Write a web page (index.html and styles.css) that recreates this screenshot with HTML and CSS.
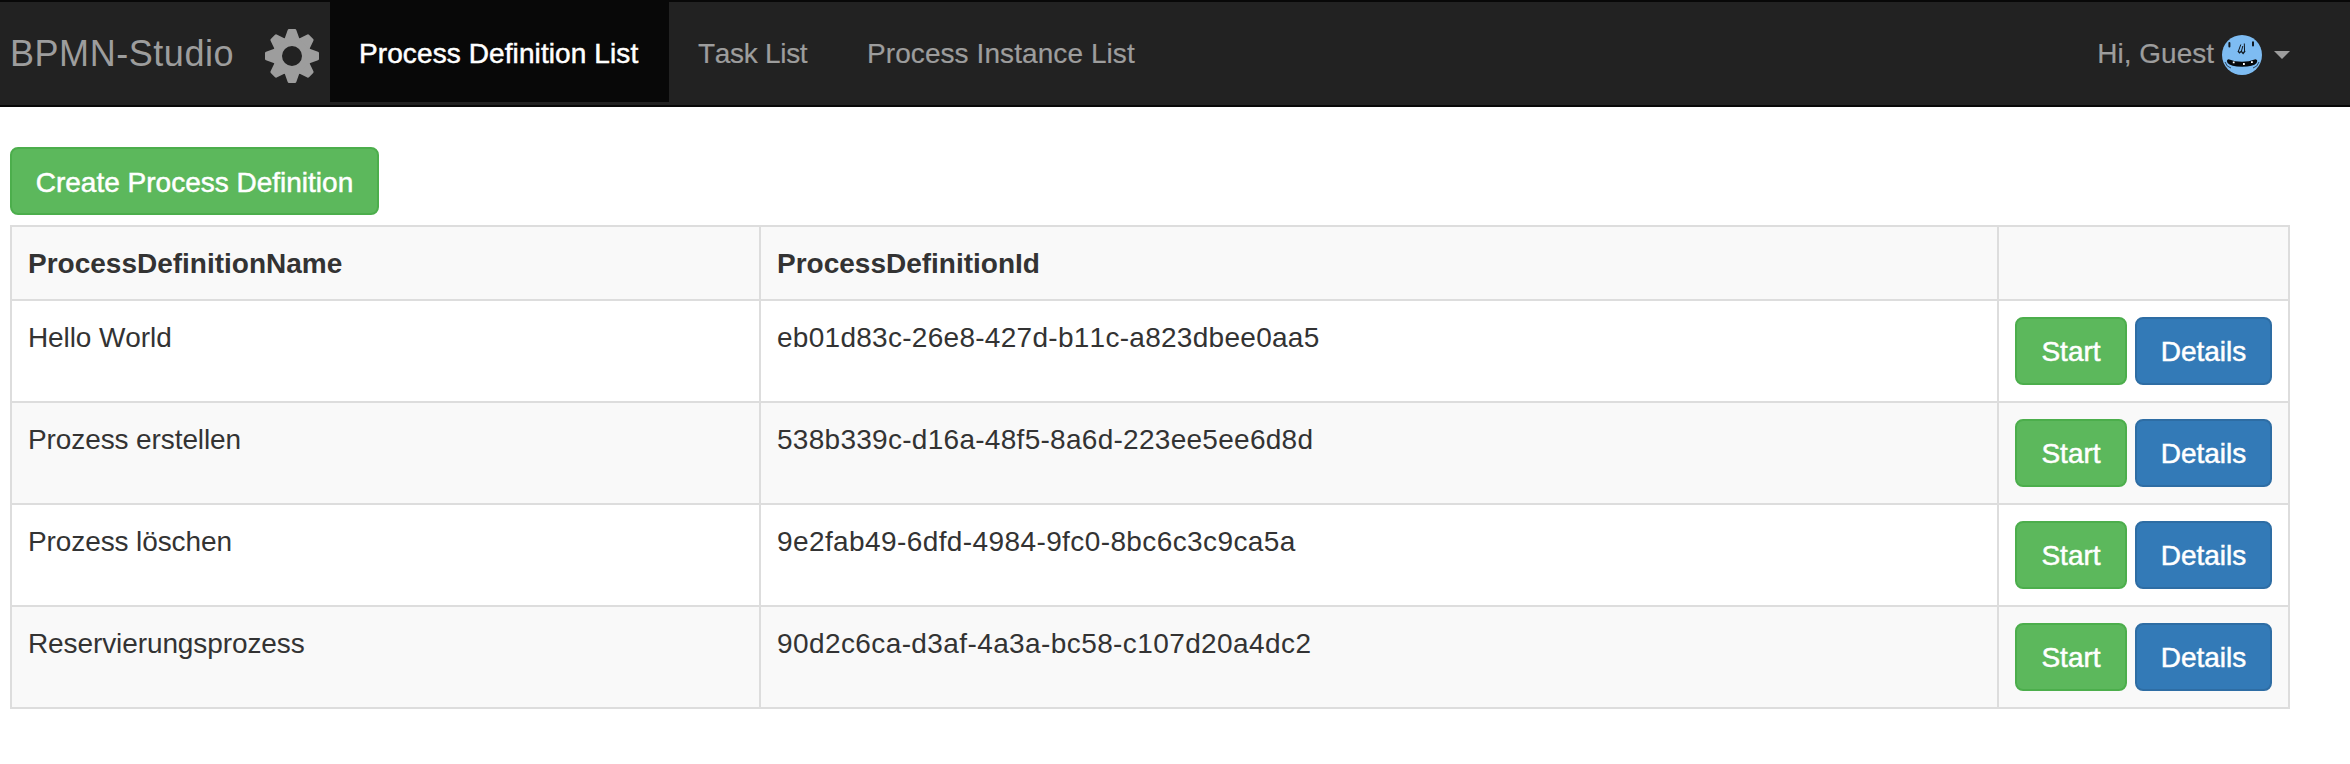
FILE: index.html
```html
<!DOCTYPE html>
<html lang="en">
<head>
<meta charset="utf-8">
<title>BPMN-Studio</title>
<link rel="stylesheet" href="styles.css">
</head>
<body>
<nav class="navbar">
  <a class="brand">BPMN-Studio</a>
  <svg class="gear" viewBox="-27 -27 54 54" aria-hidden="true">
    <defs><path id="tooth" d="M-7.5 -17L-4.3 -26Q-4 -27 -3 -27H3Q4 -27 4.3 -26L7.5 -17Z"/></defs>
    <circle r="14.5" fill="none" stroke="#9d9d9d" stroke-width="9"/>
    <g fill="#9d9d9d">
      <use href="#tooth"/><use href="#tooth" transform="rotate(45)"/><use href="#tooth" transform="rotate(90)"/><use href="#tooth" transform="rotate(135)"/><use href="#tooth" transform="rotate(180)"/><use href="#tooth" transform="rotate(225)"/><use href="#tooth" transform="rotate(270)"/><use href="#tooth" transform="rotate(315)"/>
    </g>
  </svg>
  <ul class="nav">
    <li class="nav-item active">Process Definition List</li>
    <li class="nav-item nav-tasks">Task List</li>
    <li class="nav-item nav-instances">Process Instance List</li>
  </ul>
  <div class="user">
    <span class="user-name">Hi, Guest</span>
    <svg class="avatar" viewBox="0 0 40 40" aria-hidden="true">
      <circle cx="20" cy="20" r="20" fill="#7ebcf2"/>
      <path d="M7.4 8v3.6M31 7.2v3.4" stroke="#101820" stroke-width="2" stroke-linecap="round"/>
      <path d="M18.8 9.5L16.3 16.5M22.3 8.5L22.6 17M20.8 11L19.5 16" stroke="#101820" stroke-width="1" fill="none"/>
      <path d="M16 16l1.5 1.8 1.8-1.5 1.8 2.2 1.9-2.5" stroke="#101820" stroke-width="1.3" fill="none"/>
      <path d="M6.5 24.3Q20 29.3 33.5 24.3Q36.2 24.8 34.6 28Q31.5 31.8 20 31.8Q8.5 31.5 5.6 28Q4 24.8 6.5 24.3Z" fill="#05080c"/>
      <path d="M3 27Q4.5 32 9 33M37 27Q35.5 32 31 33" stroke="#203448" stroke-width=".9" fill="none"/>
      <path d="M10.8 27.4h1.8M21 29h1.8M29 27.2h1.8" stroke="#fff" stroke-width="1.8"/>
    </svg>
    <span class="caret"></span>
  </div>
</nav>
<main class="content">
  <button class="btn btn-success btn-create">Create Process Definition</button>
  <table class="table">
    <colgroup><col class="col-name"><col class="col-id"><col class="col-actions"></colgroup>
    <tbody>
      <tr><th>ProcessDefinitionName</th><th>ProcessDefinitionId</th><th></th></tr>
      <tr><td class="name">Hello World</td><td class="id">eb01d83c-26e8-427d-b11c-a823dbee0aa5</td><td><div class="actions"><button class="btn btn-success btn-start">Start</button><button class="btn btn-primary">Details</button></div></td></tr>
      <tr><td class="name">Prozess erstellen</td><td class="id">538b339c-d16a-48f5-8a6d-223ee5ee6d8d</td><td><div class="actions"><button class="btn btn-success btn-start">Start</button><button class="btn btn-primary">Details</button></div></td></tr>
      <tr><td class="name">Prozess löschen</td><td class="id id-wide">9e2fab49-6dfd-4984-9fc0-8bc6c3c9ca5a</td><td><div class="actions"><button class="btn btn-success btn-start">Start</button><button class="btn btn-primary">Details</button></div></td></tr>
      <tr><td class="name">Reservierungsprozess</td><td class="id id-wide">90d2c6ca-d3af-4a3a-bc58-c107d20a4dc2</td><td><div class="actions"><button class="btn btn-success btn-start">Start</button><button class="btn btn-primary">Details</button></div></td></tr>
    </tbody>
  </table>
</main>
</body>
</html>
```
FILE: styles.css
```css
* { box-sizing: border-box; }

body {
  margin: 0;
  background: #fff;
  color: #333;
  font: 28px/40px "Helvetica Neue", Helvetica, "Liberation Sans", Arial, sans-serif;
  font-kerning: none;
}

.navbar {
  display: flex;
  align-items: flex-start;
  height: 107px;
  padding: 0 60px 0 10px;
  background: #222;
  border-top: 2px solid #080808;
  border-bottom: 2px solid #080808;
  color: #9d9d9d;
  white-space: nowrap;
}

.brand {
  width: 255px;
  padding-top: 32px;
  font-size: 36px;
  letter-spacing: .55px;
}

.gear {
  width: 54px;
  height: 54px;
  margin-top: 27px;
  margin-right: 11px;
}

.nav {
  display: flex;
  margin: 0;
  padding: 0;
  list-style: none;
}

.nav-item {
  height: 100px;
  padding: 32px 29px 28px;
  -webkit-text-stroke: .2px currentColor;
}

.nav-item.active {
  width: 339px;
  background: #080808;
  color: #fff;
  letter-spacing: .1px;
  -webkit-text-stroke: .5px #fff;
}

.nav-tasks {
  width: 169px;
  letter-spacing: -.3px;
}

.nav-instances { letter-spacing: .08px; }

.user {
  display: flex;
  align-items: center;
  height: 102px;
  margin-left: auto;
}

.user-name {
  padding-top: 2px;
  -webkit-text-stroke: .2px currentColor;
}

.avatar {
  width: 40px;
  height: 40px;
  margin: 4px 12px 0 8px;
}

.caret {
  border: 8px solid transparent;
  border-top-color: #9d9d9d;
  border-bottom: 0;
  margin-top: 4px;
}

.content { padding: 40px 60px 0 10px; }

.btn {
  display: block;
  width: 137px;
  height: 68px;
  padding: 2px 0 0;
  border: 2px solid;
  border-radius: 8px;
  color: #fff;
  font: inherit;
  text-align: center;
  white-space: nowrap;
  -webkit-text-stroke: .5px #fff;
}

.btn-success { background: #5cb85c; border-color: #4cae4c; }
.btn-primary { background: #337ab7; border-color: #2e6da4; }
.btn-create { width: 369px; margin-bottom: 10px; padding-top: 3px; }
.btn-start { width: 112px; }

.table {
  width: 2280px;
  table-layout: fixed;
  border-collapse: collapse;
}

.col-name { width: 749px; }
.col-id { width: 1238px; }
.col-actions { width: 291px; }

.table th,
.table td {
  height: 102px;
  padding: 16px;
  border: 2px solid #ddd;
  text-align: left;
  vertical-align: top;
}

.table th { height: 74px; padding: 17px 16px 15px; }
.table td.name { padding-top: 17px; letter-spacing: -.1px; }
.table td.id { padding-top: 17px; letter-spacing: .28px; }
.table td.id-wide { letter-spacing: .4px; }
.table tr:nth-child(odd) { background: #f9f9f9; }

.actions { display: flex; gap: 8px; }
```
